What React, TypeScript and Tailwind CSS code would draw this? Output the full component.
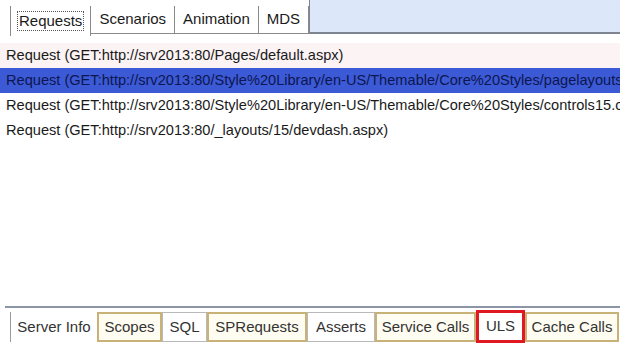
import React from "react";

const requests = [
  "Request (GET:http://srv2013:80/Pages/default.aspx)",
  "Request (GET:http://srv2013:80/Style%20Library/en-US/Themable/Core%20Styles/pagelayouts15.css)",
  "Request (GET:http://srv2013:80/Style%20Library/en-US/Themable/Core%20Styles/controls15.css)",
  "Request (GET:http://srv2013:80/_layouts/15/devdash.aspx)",
];

const topTabs = ["Requests", "Scenarios", "Animation", "MDS"];

const bottomTabs = [
  { label: "Server Info", kind: "active", w: "w-[87px]" },
  { label: "Scopes", kind: "gold", w: "w-[65px]" },
  { label: "SQL", kind: "plain", w: "w-[45px]" },
  { label: "SPRequests", kind: "gold", w: "w-[100px]" },
  { label: "Asserts", kind: "plain", w: "w-[68px]" },
  { label: "Service Calls", kind: "gold", w: "w-[101px]" },
  { label: "ULS", kind: "red", w: "w-[49px]" },
  { label: "Cache Calls", kind: "gold", w: "w-[94px]" },
];

export default function App() {
  return (
    <div className="w-[628px] h-[351px] bg-white flex flex-col overflow-hidden font-['Liberation_Sans',Arial,sans-serif] text-[15px] text-[#1a1a1a]">
      {/* top tabs */}
      <div className="flex h-[36px] pt-[6px] pl-[10px] pr-[8px]">
        {topTabs.map((t, i) => (
          <div
            key={t}
            className={
              i === 0
                ? "flex items-center px-[6px] border-l border-r border-[#8a8a8a] h-[30px]"
                : "flex items-center px-[8px] border-r border-b border-[#8a8a8a] h-[28px]"
            }
          >
            {i === 0 ? (
              <span className="border border-dotted border-[#555] px-[1px] leading-[18px]">{t}</span>
            ) : (
              <span>{t}</span>
            )}
          </div>
        ))}
        <div className="flex-1 h-[34px] -mt-[6px] bg-[#dce7f9] border-l border-b-2 border-[#7e8590]" />
      </div>

      {/* request list */}
      <div className="flex flex-col pt-[7px] pr-[8px] text-[14.6px]">
        {requests.map((r, i) => (
          <div
            key={r}
            className={
              "h-[25px] pl-[6px] flex items-center whitespace-nowrap overflow-hidden " +
              (i === 0 ? "bg-[#fbf3f4]" : i === 1 ? "bg-[#3c5ad6] text-[#0c1650]" : "")
            }
          >
            {r}
          </div>
        ))}
      </div>

      <div className="flex-1" />

      {/* bottom tabs */}
      <div className="ml-[5px] mr-[8px] h-[2px] bg-[#8c95a6]" />
      <div className="flex pl-[10px] pt-[4px] pb-[8px]">
        {bottomTabs.map((t) => {
          const base = "h-[30px] flex items-center justify-center shrink-0 " + t.w + " ";
          const style =
            t.kind === "active"
              ? "border-l border-[#9a9a9a] bg-white"
              : t.kind === "gold"
              ? "border-2 border-[#c8b277] bg-[#fffdf1]"
              : t.kind === "red"
              ? "border-[3px] border-[#e01822] bg-white h-[33px] -mt-[2px]"
              : "border border-[#b9b9b9] bg-white";
          return (
            <div key={t.label} className={base + style}>
              <span className="text-[#333]">{t.label}</span>
            </div>
          );
        })}
      </div>
    </div>
  );
}
